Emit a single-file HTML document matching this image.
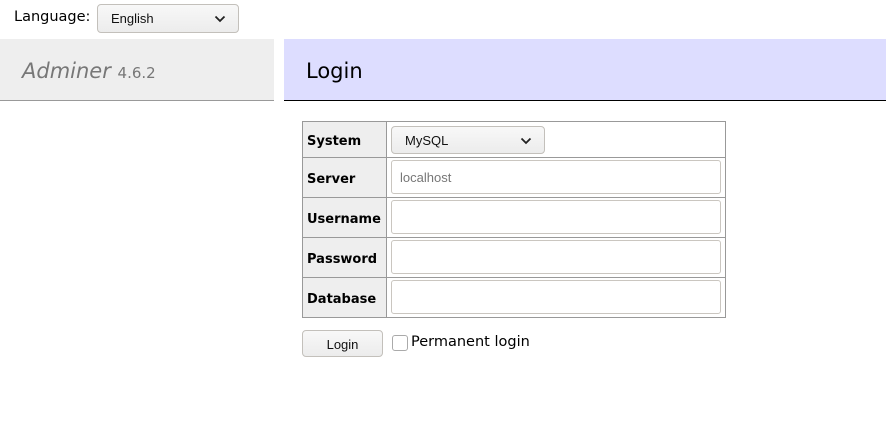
<!DOCTYPE html>
<html><head><meta charset="utf-8"><style>
*{box-sizing:border-box;margin:0;padding:0}
body{width:886px;height:428px;background:#fff;position:relative;overflow:hidden;font-family:"DejaVu Sans",Verdana,sans-serif;color:#000}
.a{position:absolute}
.sel{position:absolute;border:1px solid #c3c0bb;border-radius:4px;background:linear-gradient(#f8f8f8,#ececec);font-family:"Liberation Sans",Arial,sans-serif;font-size:13px;color:#111}
.sel span{position:absolute;left:13px;top:6px}
.sel svg{position:absolute;right:12px;top:10px}
.inp{position:absolute;left:391px;width:330px;height:34px;border:1px solid #cac6c0;border-radius:3px;background:#fff;font-family:"Liberation Sans",Arial,sans-serif;font-size:13px;color:#777}
.lb{position:absolute;left:307px;font-weight:bold;font-size:13px}
.hl{position:absolute;left:302px;width:424px;height:1px;background:#999}
</style></head><body>
<div class="a" style="left:14px;top:9px;font-size:14.5px">Language:</div>
<div class="sel" style="left:97px;top:4px;width:142px;height:29px"><span>English</span><svg width="12" height="8" viewBox="0 0 12 8"><path d="M1.5 1.5 6 6 10.5 1.5" fill="none" stroke="#222" stroke-width="1.8"/></svg></div>

<div class="a" style="left:0;top:39px;width:274px;height:62px;background:#eee;border-bottom:1px solid #999"></div>
<div class="a" style="left:22px;top:59px;font-size:21px;font-style:italic;color:#777">Adminer <span style="font-style:normal;font-size:15px">4.6.2</span></div>
<div class="a" style="left:284px;top:39px;width:602px;height:62px;background:#ddf;border-bottom:1px solid #000"></div>
<div class="a" style="left:306px;top:59px;font-size:21px">Login</div>

<div class="a" style="left:302px;top:121px;width:424px;height:197px;border:1px solid #999;background:#fff"></div>
<div class="a" style="left:303px;top:122px;width:84px;height:195px;background:#eee;border-right:1px solid #999"></div>
<div class="hl" style="top:157px"></div>
<div class="hl" style="top:197px"></div>
<div class="hl" style="top:237px"></div>
<div class="hl" style="top:277px"></div>
<div class="lb" style="top:134px">System</div>
<div class="lb" style="top:172px">Server</div>
<div class="lb" style="top:212px">Username</div>
<div class="lb" style="top:252px">Password</div>
<div class="lb" style="top:292px">Database</div>

<div class="sel" style="left:391px;top:126px;width:154px;height:28px"><span>MySQL</span><svg width="12" height="8" viewBox="0 0 12 8"><path d="M1.5 1.5 6 6 10.5 1.5" fill="none" stroke="#222" stroke-width="1.8"/></svg></div>
<div class="inp" style="top:160px"><span style="position:absolute;left:8px;top:9px">localhost</span></div>
<div class="inp" style="top:200px"></div>
<div class="inp" style="top:240px"></div>
<div class="inp" style="top:280px"></div>

<div class="sel" style="left:302px;top:330px;width:81px;height:27px;text-align:center"><span style="left:0;width:79px;top:6px">Login</span></div>
<div class="a" style="left:392px;top:335px;width:16px;height:16px;border:1px solid #aaa;border-radius:3px;background:#fff"></div>
<div class="a" style="left:411px;top:334px;font-size:14.5px">Permanent login</div>
</body></html>
